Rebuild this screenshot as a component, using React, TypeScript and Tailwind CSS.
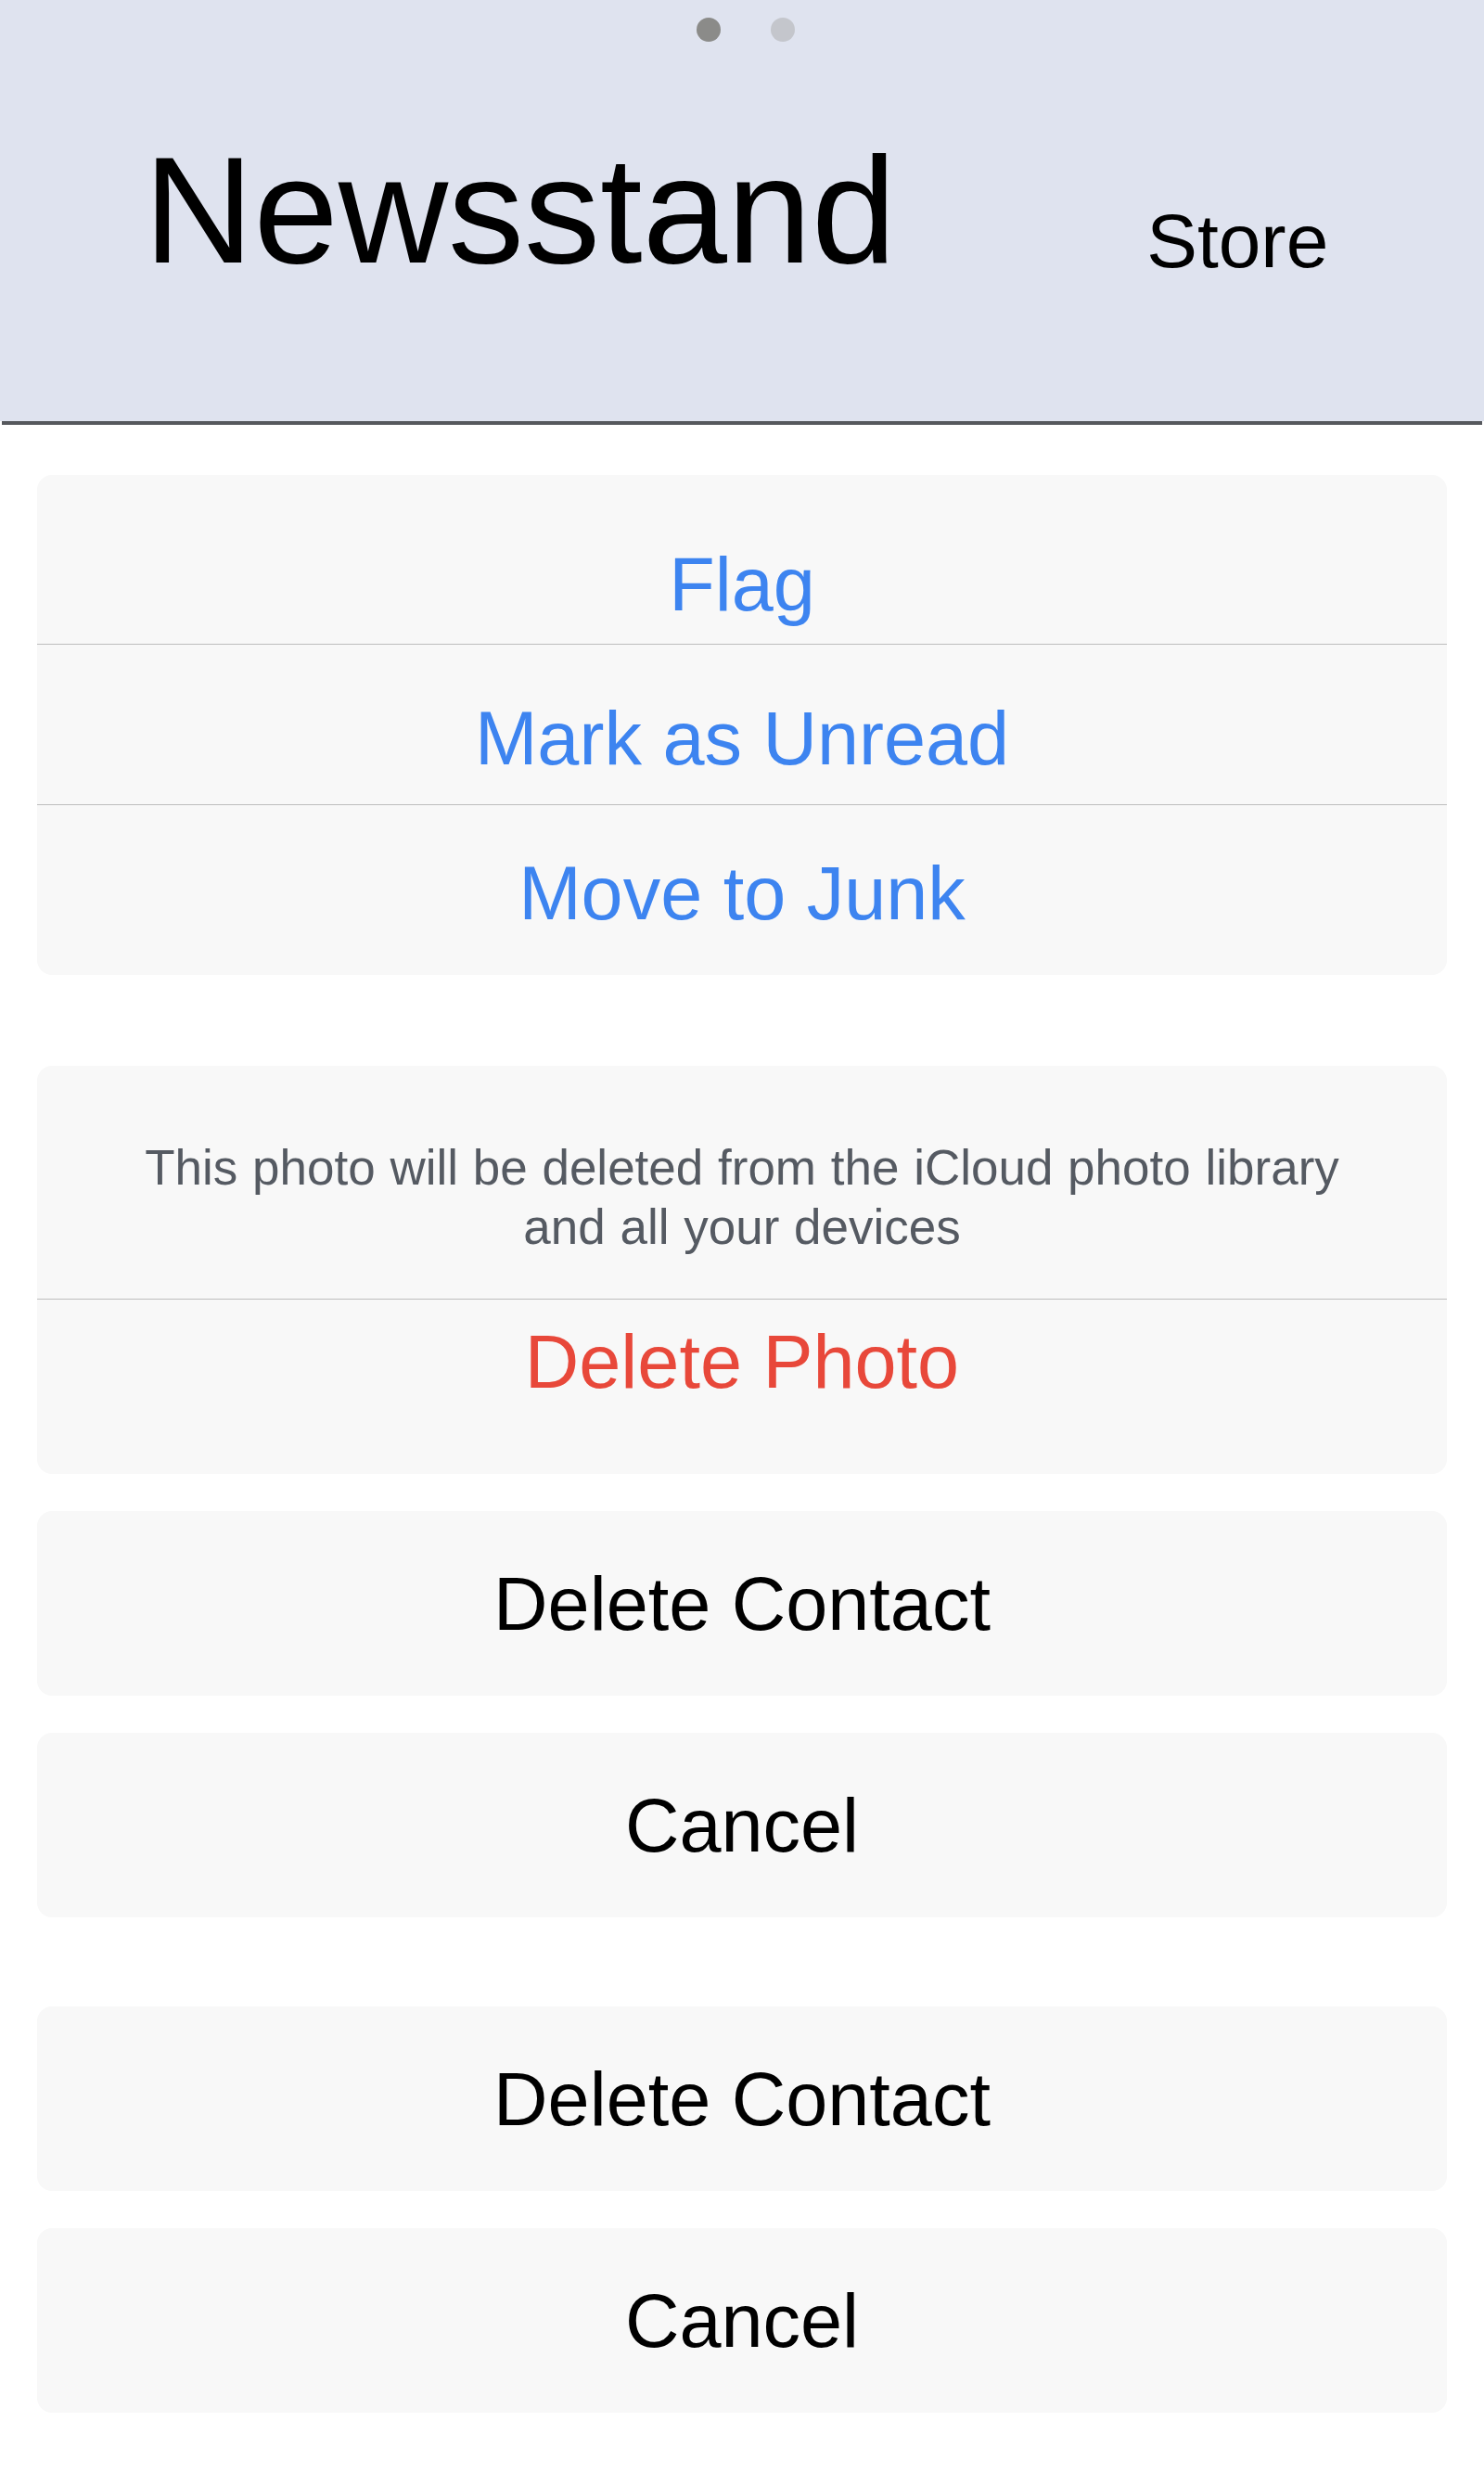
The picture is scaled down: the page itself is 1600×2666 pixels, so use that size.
import { ReactNode } from 'react'

const font = { fontFamily: '"Liberation Sans", Arial, Helvetica, sans-serif' }

function Card({ children, className = '' }: { children: ReactNode; className?: string }) {
  return (
    <div className={`mx-[40px] rounded-[16px] bg-[#f8f8f8] overflow-hidden ${className}`}>
      {children}
    </div>
  )
}

function Divider() {
  return <div className="h-px bg-[#bdbdbd]" />
}

function SingleButton({ label }: { label: string }) {
  return (
    <Card className="h-[199px] flex items-center justify-center">
      <span className="text-[81px] leading-[92px] text-black">{label}</span>
    </Card>
  )
}

export default function App() {
  return (
    <div className="w-[1600px] min-h-[2666px] bg-white" style={font}>
      {/* Header */}
      <header className="h-[454px] bg-[#dfe3ef] flex flex-col">
        <div className="flex justify-center gap-[54px] pt-[19px] pl-[8px]">
          <span className="h-[26px] w-[26px] rounded-full bg-[#8b8b89]" />
          <span className="h-[26px] w-[26px] rounded-full bg-[#c4c6cc]" />
        </div>
        <div className="flex items-start pl-[155px] mt-[100px]">
          <h1 className="text-[164px] leading-none font-normal text-black">Newsstand</h1>
          <span className="ml-[270px] mt-[74px] text-[82px] leading-none text-black">Store</span>
        </div>
      </header>
      <div className="mx-[2px] h-[4px] bg-[#56585d]" />

      {/* Mail actions */}
      <Card className="mt-[54px] text-[#3d84f0] text-center text-[81px] leading-[92px]">
        <div className="h-[182px] pt-[72px]">Flag</div>
        <Divider />
        <div className="h-[172px] pt-[55px]">Mark as Unread</div>
        <Divider />
        <div className="h-[183px] pt-[49px]">Move to Junk</div>
      </Card>

      {/* Delete photo */}
      <Card className="mt-[98px] text-center">
        <div className="h-[251px] pt-[78px] px-[100px] text-[53px] leading-[64px] text-[#555a62] [word-spacing:1px]">
          This photo will be deleted from the iCloud photo library and all your devices
        </div>
        <Divider />
        <div className="h-[188px] pt-[21px] text-[81px] leading-[92px] text-[#e8483a]">Delete Photo</div>
      </Card>

      <div className="mt-[40px] flex flex-col gap-[40px]">
        <SingleButton label="Delete Contact" />
        <SingleButton label="Cancel" />
      </div>

      <div className="mt-[96px] flex flex-col gap-[40px]">
        <SingleButton label="Delete Contact" />
        <SingleButton label="Cancel" />
      </div>
    </div>
  )
}
